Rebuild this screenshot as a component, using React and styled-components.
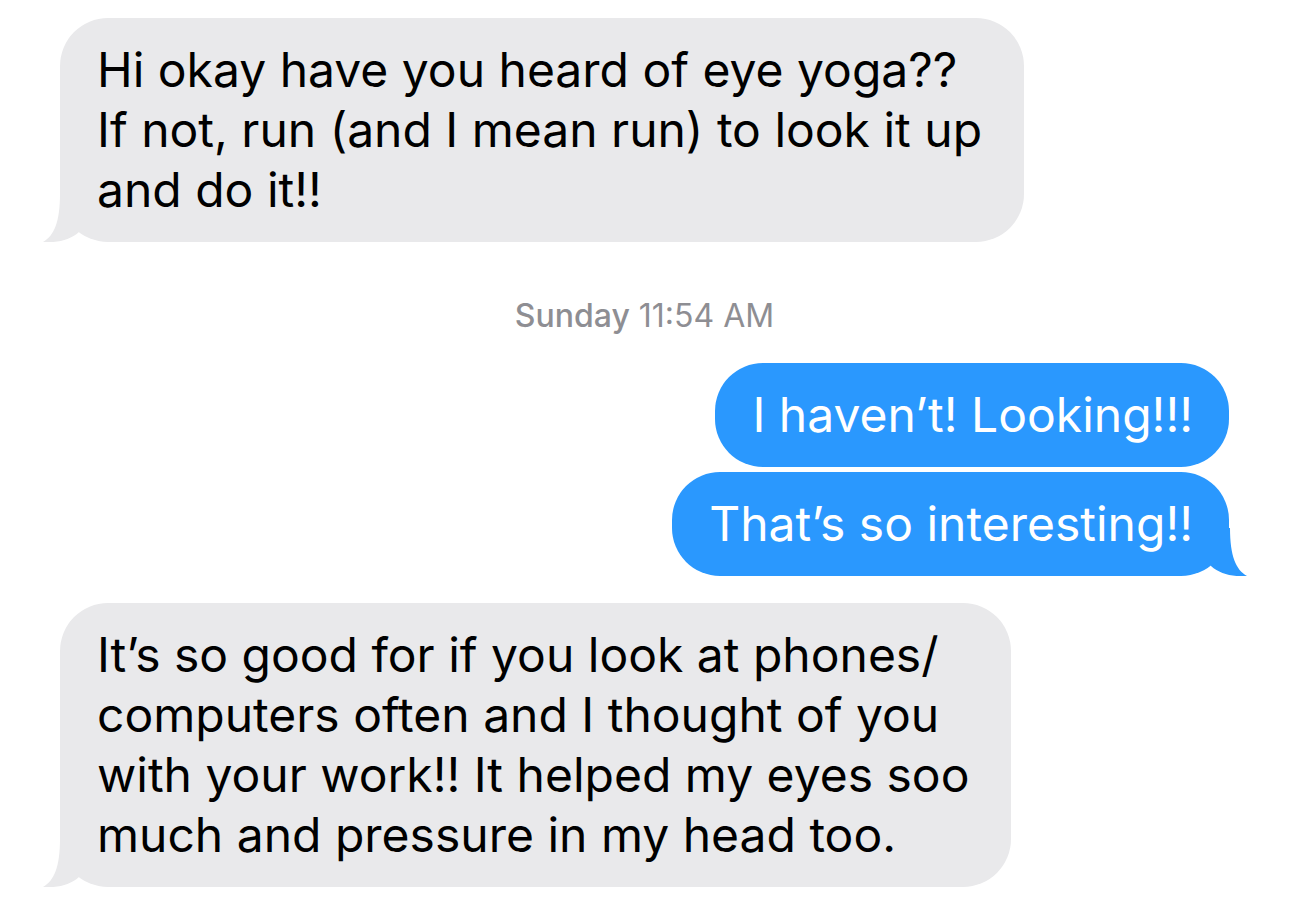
import styled, { createGlobalStyle } from "styled-components";

const Global = createGlobalStyle`
  html, body {
    margin: 0;
    padding: 0;
    background: #fff;
  }
  body {
    font-family: Inter, "Liberation Sans", sans-serif;
    -webkit-font-smoothing: antialiased;
  }
`;

const Thread = styled.div`
  width: 1290px;
  height: 902px;
  box-sizing: border-box;
  padding: 18px 61px 0 60px;
  display: flex;
  flex-direction: column;
  overflow: hidden;
`;

const Row = styled.div`
  display: flex;
  justify-content: ${(p) => (p.$mine ? "flex-end" : "flex-start")};
  margin-top: ${(p) => p.$gap || 0}px;
`;

const Bubble = styled.div`
  position: relative;
  width: fit-content;
  padding: 22px ${(p) => (p.$mine ? 36 : 42)}px 22px 37px;
  border-radius: 48px;
  background: ${(p) => (p.$mine ? "#2a98fe" : "#e9e9eb")};
  color: ${(p) => (p.$mine ? "#fff" : "#000")};
  font-size: 48px;
  line-height: 60px;
  letter-spacing: 0;
  white-space: nowrap;
`;

const Tail = styled.svg`
  position: absolute;
  bottom: 0;
  width: 40px;
  height: 50px;
  ${(p) =>
    p.$mine
      ? "right: -18px; transform: scaleX(-1);"
      : "left: -17px;"}
`;

const Stamp = styled.div`
  margin: 55px 0 28px;
  text-align: center;
  color: #8e8e93;
  font-size: 32px;
  line-height: 38px;
  b {
    font-weight: 500;
  }
`;

const BubbleTail = ({ mine }) => (
  <Tail $mine={mine} viewBox="0 0 40 50">
    <path
      d="M17 2 C17 30 11 44 0 50 C15 51 27 48 36 40 L36 2 Z"
      fill={mine ? "#2a98fe" : "#e9e9eb"}
    />
  </Tail>
);

const Message = ({ mine, tail, gap, lines }) => (
  <Row $mine={mine} $gap={gap}>
    <Bubble $mine={mine}>
      {lines.map((l, i) => (
        <div key={i}>{l}</div>
      ))}
      {tail && <BubbleTail mine={mine} />}
    </Bubble>
  </Row>
);

export default function App() {
  return (
    <>
      <Global />
      <Thread>
        <Message
          tail
          lines={[
            "Hi okay have you heard of eye yoga??",
            "If not, run (and I mean run) to look it up",
            "and do it!!",
          ]}
        />
        <Stamp>
          <b>Sunday</b> 11:54 AM
        </Stamp>
        <Message mine lines={["I haven’t! Looking!!!"]} />
        <Message mine tail gap={5} lines={["That’s so interesting!!"]} />
        <Message
          tail
          gap={27}
          lines={[
            "It’s so good for if you look at phones/",
            "computers often and I thought of you",
            "with your work!! It helped my eyes soo",
            "much and pressure in my head too.",
          ]}
        />
      </Thread>
    </>
  );
}
